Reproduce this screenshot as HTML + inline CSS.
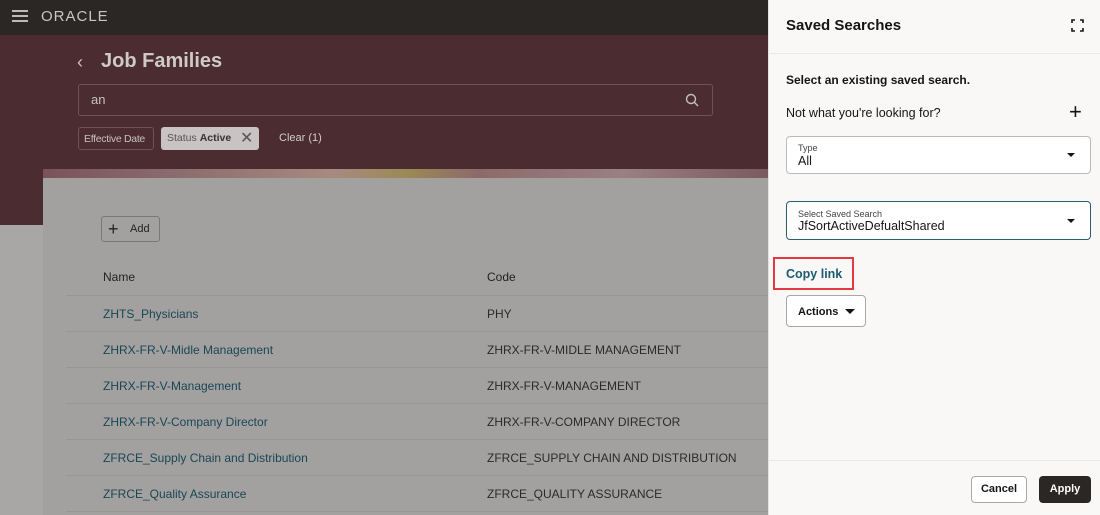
<!DOCTYPE html>
<html><head><style>
*{box-sizing:border-box;margin:0;padding:0}
body{width:1100px;height:515px;overflow:hidden;position:relative;font-family:"Liberation Sans",sans-serif;background:#a5a3a1}
.abs{position:absolute}
</style></head><body>
<div class="abs" style="left:0;top:0;width:768px;height:35px;background:#2b2725"></div>
<div class="abs" style="left:12px;top:10px;width:16px;height:2px;background:#bbb;box-shadow:0 5px 0 #bbb,0 10px 0 #bbb"></div>
<div class="abs" style="left:41px;top:8px;color:#c8c6c4;font-size:15px;letter-spacing:1px">ORACLE</div>
<div class="abs" style="left:0;top:35px;width:768px;height:190px;background:#4a2c31"></div>
<div class="abs" style="left:0;top:225px;width:43px;height:290px;background:#a9a7a5"></div>
<div class="abs" style="left:77px;top:52px;color:#c8c0c0;font-size:18px">‹</div>
<div class="abs" style="left:101px;top:50px;color:#cfcaca;font-size:20px;font-weight:bold">Job Families</div>
<div class="abs" style="left:78px;top:84px;width:635px;height:32px;border:1px solid #6e5257;border-radius:3px"></div>
<div class="abs" style="left:91px;top:92px;color:#c8c0c0;font-size:13px">an</div>
<svg class="abs" style="left:685px;top:93px" width="14" height="14"><circle cx="6" cy="6" r="4.5" stroke="#c8c0c0" stroke-width="1.4" fill="none"/><line x1="9.5" y1="9.5" x2="13" y2="13" stroke="#c8c0c0" stroke-width="1.4"/></svg>
<div class="abs" style="left:78px;top:127px;width:76px;height:23px;border:1px solid #6e5257;border-radius:3px;color:#c8c0c0;font-size:10.5px;padding:5px 5px;white-space:nowrap;letter-spacing:-0.3px">Effective Date</div>
<div class="abs" style="left:161px;top:127px;width:98px;height:23px;background:#c9c3c3;border-radius:3px;color:#555;font-size:10.5px;padding:5px 6px;white-space:nowrap">Status <b style="color:#333">Active</b><span style="position:absolute;left:79px;top:1px;font-size:16px;color:#555">✕</span></div>
<div class="abs" style="left:279px;top:132px;color:#d0cccc;font-size:11px">Clear (1)</div>
<div class="abs" style="left:43px;top:169px;width:725px;height:10px;background:linear-gradient(90deg,#7a5358,#8d6e6e 20%,#a88a80 40%,#9b8a55 50%,#8d6a6a 60%,#9a8080 80%,#7a5a5e)"></div>
<div class="abs" style="left:43px;top:178px;width:725px;height:337px;background:#a3a19f"></div>
<div class="abs" style="left:101px;top:216px;width:59px;height:26px;border:1px solid #7a7876;border-radius:3px;font-size:11px;color:#222;padding:6px 0 0 28px">Add</div>
<div class="abs" style="left:108px;top:221px;font-size:18px;color:#222;line-height:16px">+</div>
<div class="abs" style="left:103px;top:270px;font-size:12px;color:#222">Name</div>
<div class="abs" style="left:487px;top:270px;font-size:12px;color:#222">Code</div>
<div class="abs" style="left:66px;top:295px;width:702px;border-top:1px solid #989694"></div>
<div style="position:absolute;left:0;top:296px;font-size:12px">
<div class="abs" style="left:103px;top:11px;color:#184656;white-space:nowrap">ZHTS_Physicians</div><div class="abs" style="left:487px;top:11px;color:#2a2a2a;white-space:nowrap">PHY</div>
<div class="abs" style="left:66px;top:35px;width:702px;border-top:1px solid #989694"></div>
<div class="abs" style="left:103px;top:47px;color:#184656;white-space:nowrap">ZHRX-FR-V-Midle Management</div><div class="abs" style="left:487px;top:47px;color:#2a2a2a;white-space:nowrap">ZHRX-FR-V-MIDLE MANAGEMENT</div>
<div class="abs" style="left:66px;top:71px;width:702px;border-top:1px solid #989694"></div>
<div class="abs" style="left:103px;top:83px;color:#184656;white-space:nowrap">ZHRX-FR-V-Management</div><div class="abs" style="left:487px;top:83px;color:#2a2a2a;white-space:nowrap">ZHRX-FR-V-MANAGEMENT</div>
<div class="abs" style="left:66px;top:107px;width:702px;border-top:1px solid #989694"></div>
<div class="abs" style="left:103px;top:119px;color:#184656;white-space:nowrap">ZHRX-FR-V-Company Director</div><div class="abs" style="left:487px;top:119px;color:#2a2a2a;white-space:nowrap">ZHRX-FR-V-COMPANY DIRECTOR</div>
<div class="abs" style="left:66px;top:143px;width:702px;border-top:1px solid #989694"></div>
<div class="abs" style="left:103px;top:155px;color:#184656;white-space:nowrap">ZFRCE_Supply Chain and Distribution</div><div class="abs" style="left:487px;top:155px;color:#2a2a2a;white-space:nowrap">ZFRCE_SUPPLY CHAIN AND DISTRIBUTION</div>
<div class="abs" style="left:66px;top:179px;width:702px;border-top:1px solid #989694"></div>
<div class="abs" style="left:103px;top:191px;color:#184656;white-space:nowrap">ZFRCE_Quality Assurance</div><div class="abs" style="left:487px;top:191px;color:#2a2a2a;white-space:nowrap">ZFRCE_QUALITY ASSURANCE</div>
<div class="abs" style="left:66px;top:215px;width:702px;border-top:1px solid #989694"></div>
</div>
<!-- panel -->
<div class="abs" style="left:768px;top:0;width:332px;height:515px;background:#f9f8f6;border-left:1px solid #e4e2e0"></div>
<div class="abs" style="left:768px;top:53px;width:332px;border-top:1px solid #ebe9e7"></div>
<div class="abs" style="left:786px;top:17px;font-size:15px;font-weight:bold;color:#161513">Saved Searches</div>
<svg class="abs" style="left:1071px;top:19px" width="13" height="13" fill="none" stroke="#161513" stroke-width="1.6"><path d="M1 4V1h3M9 1h3v3M12 9v3H9M4 12H1V9"/></svg>
<div class="abs" style="left:786px;top:73px;font-size:12px;font-weight:bold;color:#161513">Select an existing saved search.</div>
<div class="abs" style="left:786px;top:106px;font-size:12.5px;color:#161513">Not what you're looking for?</div>
<div class="abs" style="left:1069px;top:100px;font-size:22px;color:#161513;line-height:24px">+</div>
<div class="abs" style="left:786px;top:136px;width:305px;height:38px;border:1px solid #bdbbb9;border-radius:4px;background:#fff"></div>
<div class="abs" style="left:798px;top:143px;font-size:9px;color:#444">Type</div>
<div class="abs" style="left:798px;top:154px;font-size:12.5px;color:#161513">All</div>
<div class="abs" style="left:1067px;top:153px;width:0;height:0;border-left:4px solid transparent;border-right:4px solid transparent;border-top:4px solid #161513"></div>
<div class="abs" style="left:786px;top:201px;width:305px;height:39px;border:1px solid #2a5e70;border-radius:4px;background:#fff"></div>
<div class="abs" style="left:798px;top:209px;font-size:9px;color:#444">Select Saved Search</div>
<div class="abs" style="left:798px;top:219px;font-size:12.5px;color:#161513">JfSortActiveDefualtShared</div>
<div class="abs" style="left:1067px;top:219px;width:0;height:0;border-left:4px solid transparent;border-right:4px solid transparent;border-top:4px solid #161513"></div>
<div class="abs" style="left:773px;top:257px;width:81px;height:33px;border:2px solid #e5393f"></div>
<div class="abs" style="left:786px;top:267px;font-size:12.5px;font-weight:bold;color:#1c5a70">Copy link</div>
<div class="abs" style="left:786px;top:295px;width:80px;height:32px;border:1px solid #a9a7a5;border-radius:4px;background:#fff;font-size:11px;font-weight:bold;color:#161513;padding:10px 0 0 11px">Actions</div>
<div class="abs" style="left:845px;top:309px;width:0;height:0;border-left:5px solid transparent;border-right:5px solid transparent;border-top:5px solid #161513"></div>
<div class="abs" style="left:768px;top:460px;width:332px;border-top:1px solid #ebe9e7"></div>
<div class="abs" style="left:971px;top:476px;width:56px;height:27px;border:1px solid #a9a7a5;border-radius:4px;background:#fff;font-size:11px;font-weight:bold;color:#161513;text-align:center;line-height:25px">Cancel</div>
<div class="abs" style="left:1039px;top:476px;width:52px;height:27px;border-radius:4px;background:#2b2725;font-size:11px;font-weight:bold;color:#fff;text-align:center;line-height:27px">Apply</div>
</body></html>
